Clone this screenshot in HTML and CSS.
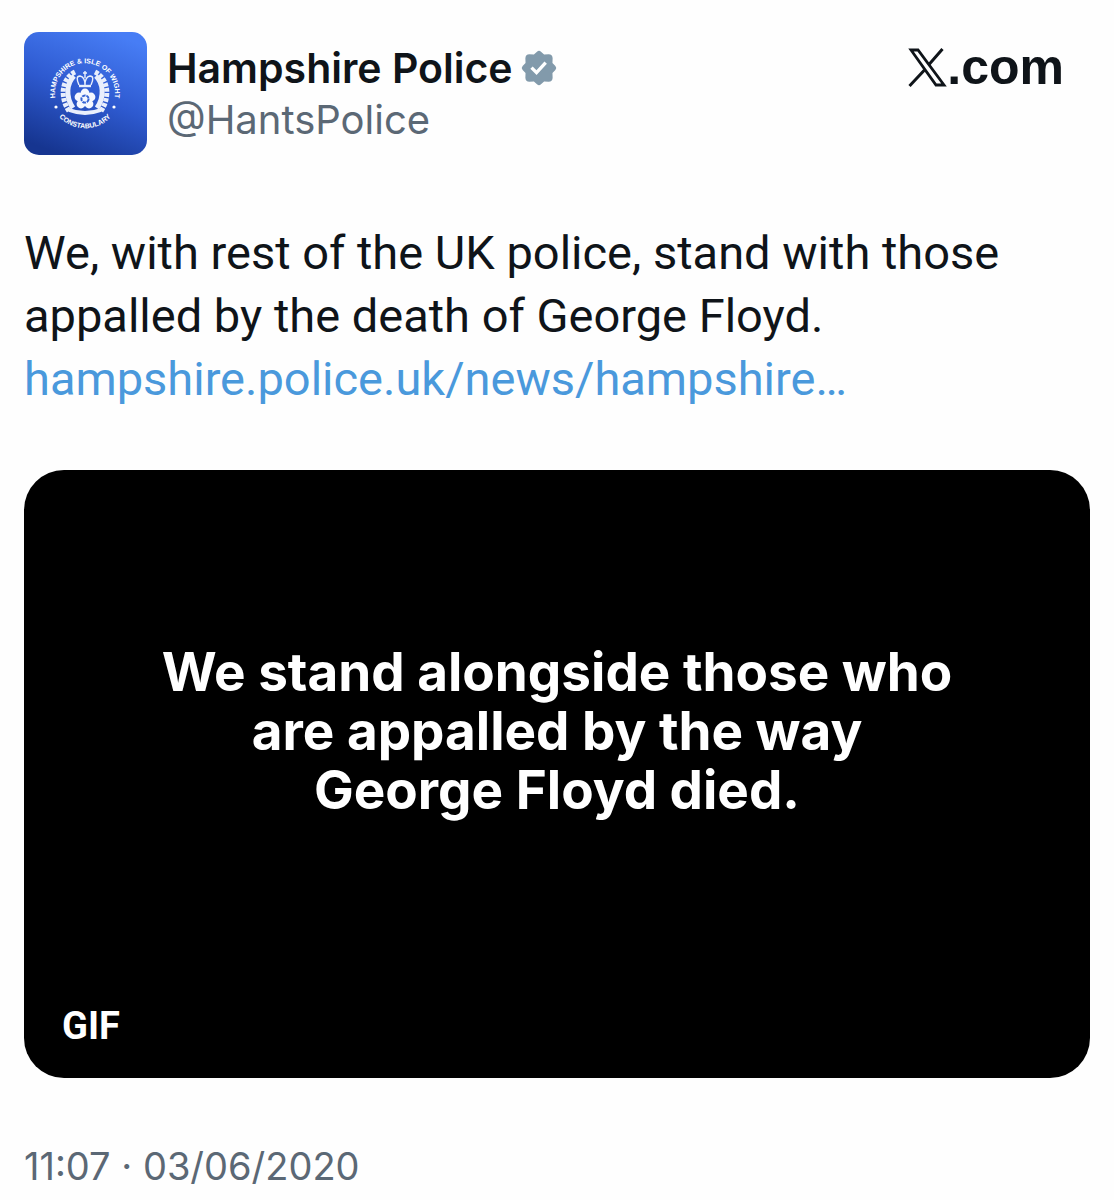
FILE: index.html
```html
<!DOCTYPE html>
<html lang="en">
<head>
  <meta charset="UTF-8">
  <meta name="viewport" content="width=device-width, initial-scale=1.0">
  <title>Hampshire Police on X</title>
  <link rel="stylesheet" href="styles.css">
</head>
<body>

  <article class="post">
    <header class="post-header">
      <svg class="avatar" viewBox="0 0 123 123" role="img" aria-label="Hampshire Police badge">
        <defs>
          <linearGradient id="avatarBg" x1="0.7" y1="0" x2="0.3" y2="1">
            <stop offset="0" stop-color="#477df5"/>
            <stop offset="0.5" stop-color="#2e5ad0"/>
            <stop offset="1" stop-color="#163590"/>
          </linearGradient>
          <path id="ringTop" d="M33 72 A30 30 0 1 1 89 72"/>
          <path id="ringBottom" d="M28 73 A35 35 0 0 0 94 73"/>
        </defs>
        <rect width="123" height="123" rx="15" fill="url(#avatarBg)"/>
        <g class="ring-text">
          <text><textPath href="#ringTop" startOffset="50%">HAMPSHIRE &amp; ISLE OF WIGHT</textPath></text>
          <text><textPath href="#ringBottom" startOffset="50%">CONSTABULARY</textPath></text>
        </g>
        <circle cx="32" cy="75" r="1.6" fill="#fff"/>
        <circle cx="90" cy="75" r="1.6" fill="#fff"/>
        <!-- wreath -->
        <g fill="none" stroke="#e9effc">
          <path d="M50 44 C43 51 41 64 49 76 M72 44 C79 51 81 64 73 76" stroke-width="5"/>
          <path d="M51 40 C37 47 36 66 45 79 M71 40 C85 47 86 66 77 79" stroke-width="5" stroke-dasharray="3.8 1.3"/>
          <path d="M45 78 Q61 84 77 78" stroke-width="4"/>
        </g>
        <!-- crown -->
        <g fill="none" stroke="#e9effc" stroke-width="1.4">
          <path d="M55 53 Q51 44 56 44 Q61 45 61 53 Q61 45 66 44 Q71 44 67 53 M61 39 V46 M59 41 H63"/>
          <path d="M55 54 H67" stroke-width="2.4"/>
        </g>
        <!-- rose -->
        <g fill="#f4f7ff">
          <circle cx="61" cy="61" r="4.4"/>
          <circle cx="67" cy="65" r="4.4"/>
          <circle cx="65" cy="72" r="4.4"/>
          <circle cx="57" cy="72" r="4.4"/>
          <circle cx="55" cy="65" r="4.4"/>
        </g>
        <circle cx="61" cy="67" r="6" fill="#f4f7ff"/>
        <circle cx="61" cy="67" r="3.6" fill="none" stroke="#3563d3" stroke-width="2" stroke-dasharray="3.6 0.9"/>
      </svg>

      <div class="author">
        <div class="name-row">
          <h1 class="name">Hampshire Police</h1>
          <svg class="verified" viewBox="0 0 22 22" role="img" aria-label="Verified account">
            <path fill="#829aab" d="M9.900 2 Q11 1 12.100 2 L13.800 3.600 L16.300 3.500 Q18.400 3.600 18.500 5.700 L18.400 8.200 L20 9.900 Q21 11 20 12.100 L18.400 13.800 L18.500 16.300 Q18.400 18.400 16.300 18.500 L13.800 18.400 L12.100 20 Q11 21 9.900 20 L8.200 18.400 L5.700 18.500 Q3.600 18.400 3.500 16.300 L3.600 13.800 L2 12.100 Q1 11 2 9.900 L3.600 8.200 L3.500 5.700 Q3.600 3.600 5.700 3.500 L8.200 3.600 Z"/>
            <path fill="#fff" d="M9.662 14.850l-3.429-3.428 1.293-1.302 2.072 2.072 4.400-4.794 1.347 1.246z"/>
          </svg>
        </div>
        <a class="handle" href="https://x.com/HantsPolice">@HantsPolice</a>
      </div>

      <a class="site" href="https://x.com" aria-label="X.com">
        <svg class="x-logo" viewBox="0 0 39 40" aria-hidden="true">
          <g fill="none" stroke="#0f1419">
            <path d="M3 2 H10 L36 37 H28 Z" stroke-width="2.800"/>
            <path d="M34.500 1 L21 16.500 M16.500 22 L1.500 38" stroke-width="3"/>
          </g>
        </svg><span>.com</span>
      </a>
    </header>

    <p class="post-text">
      We, with rest of the UK police, stand with those appalled by the death of George Floyd.
      <a href="https://www.hampshire.police.uk/news/">hampshire.police.uk/news/hampshire…</a>
    </p>

    <div class="media">
      <p class="media-text">We stand alongside those who<br>are appalled by the way<br>George Floyd died.</p>
      <span class="gif-badge">GIF</span>
    </div>

    <time class="date" datetime="2020-06-03T11:07">11:07 · 03/06/2020</time>
  </article>

</body>
</html>
```

FILE: styles.css
```css
* {
  box-sizing: border-box;
}

body {
  margin: 0;
  background: #fefefe;
  color: #0f1419;
  font-family: Inter, "Liberation Sans", sans-serif;
}

a {
  text-decoration: none;
}

.post {
  padding: 32px 24px 0;
}

.post-header {
  display: flex;
  align-items: flex-start;
}

.avatar {
  width: 123px;
  height: 123px;
  margin-right: 20px;
  flex-shrink: 0;
}

.ring-text {
  fill: #fff;
  font-family: "Liberation Sans", sans-serif;
  font-size: 7px;
  font-weight: bold;
  text-anchor: middle;
}

.author {
  display: flex;
  flex-direction: column;
  padding-top: 10px;
}

.name-row {
  display: flex;
  align-items: center;
  gap: 6px;
}

.name {
  margin: 0;
  font-size: 41px;
  font-weight: 600;
  line-height: 52px;
}

.verified {
  width: 40px;
  height: 40px;
}

.handle {
  color: #5b6875;
  font-size: 40px;
  line-height: 52px;
}

.site {
  display: flex;
  align-items: flex-end;
  margin-left: auto;
  padding: 14px 26px 0 0;
  color: #0f1419;
  font-family: "Liberation Sans", sans-serif;
  font-size: 50px;
  font-weight: 700;
  line-height: 42px;
}

.x-logo {
  width: 39px;
  height: 40px;
}

.post-text {
  margin: 66px 0 60px;
  font-family: Roboto, "Noto Sans", sans-serif;
  font-size: 47px;
  line-height: 63px;
}

.post-text a {
  display: block;
  color: #4a99dc;
}

.media {
  display: flex;
  position: relative;
  align-items: center;
  justify-content: center;
  aspect-ratio: 1066 / 608;
  padding-bottom: 86px;
  border-radius: 40px;
  background: #000;
  color: #fff;
}

.media-text {
  margin: 0;
  font-size: 53px;
  font-weight: 700;
  line-height: 59px;
  text-align: center;
}

.gif-badge {
  position: absolute;
  bottom: 29px;
  left: 38px;
  font-family: Roboto, sans-serif;
  font-size: 38px;
  font-weight: 700;
  line-height: 46px;
}

.date {
  display: block;
  padding-top: 62px;
  color: #5b6875;
  font-size: 38px;
  line-height: 52px;
}
```
